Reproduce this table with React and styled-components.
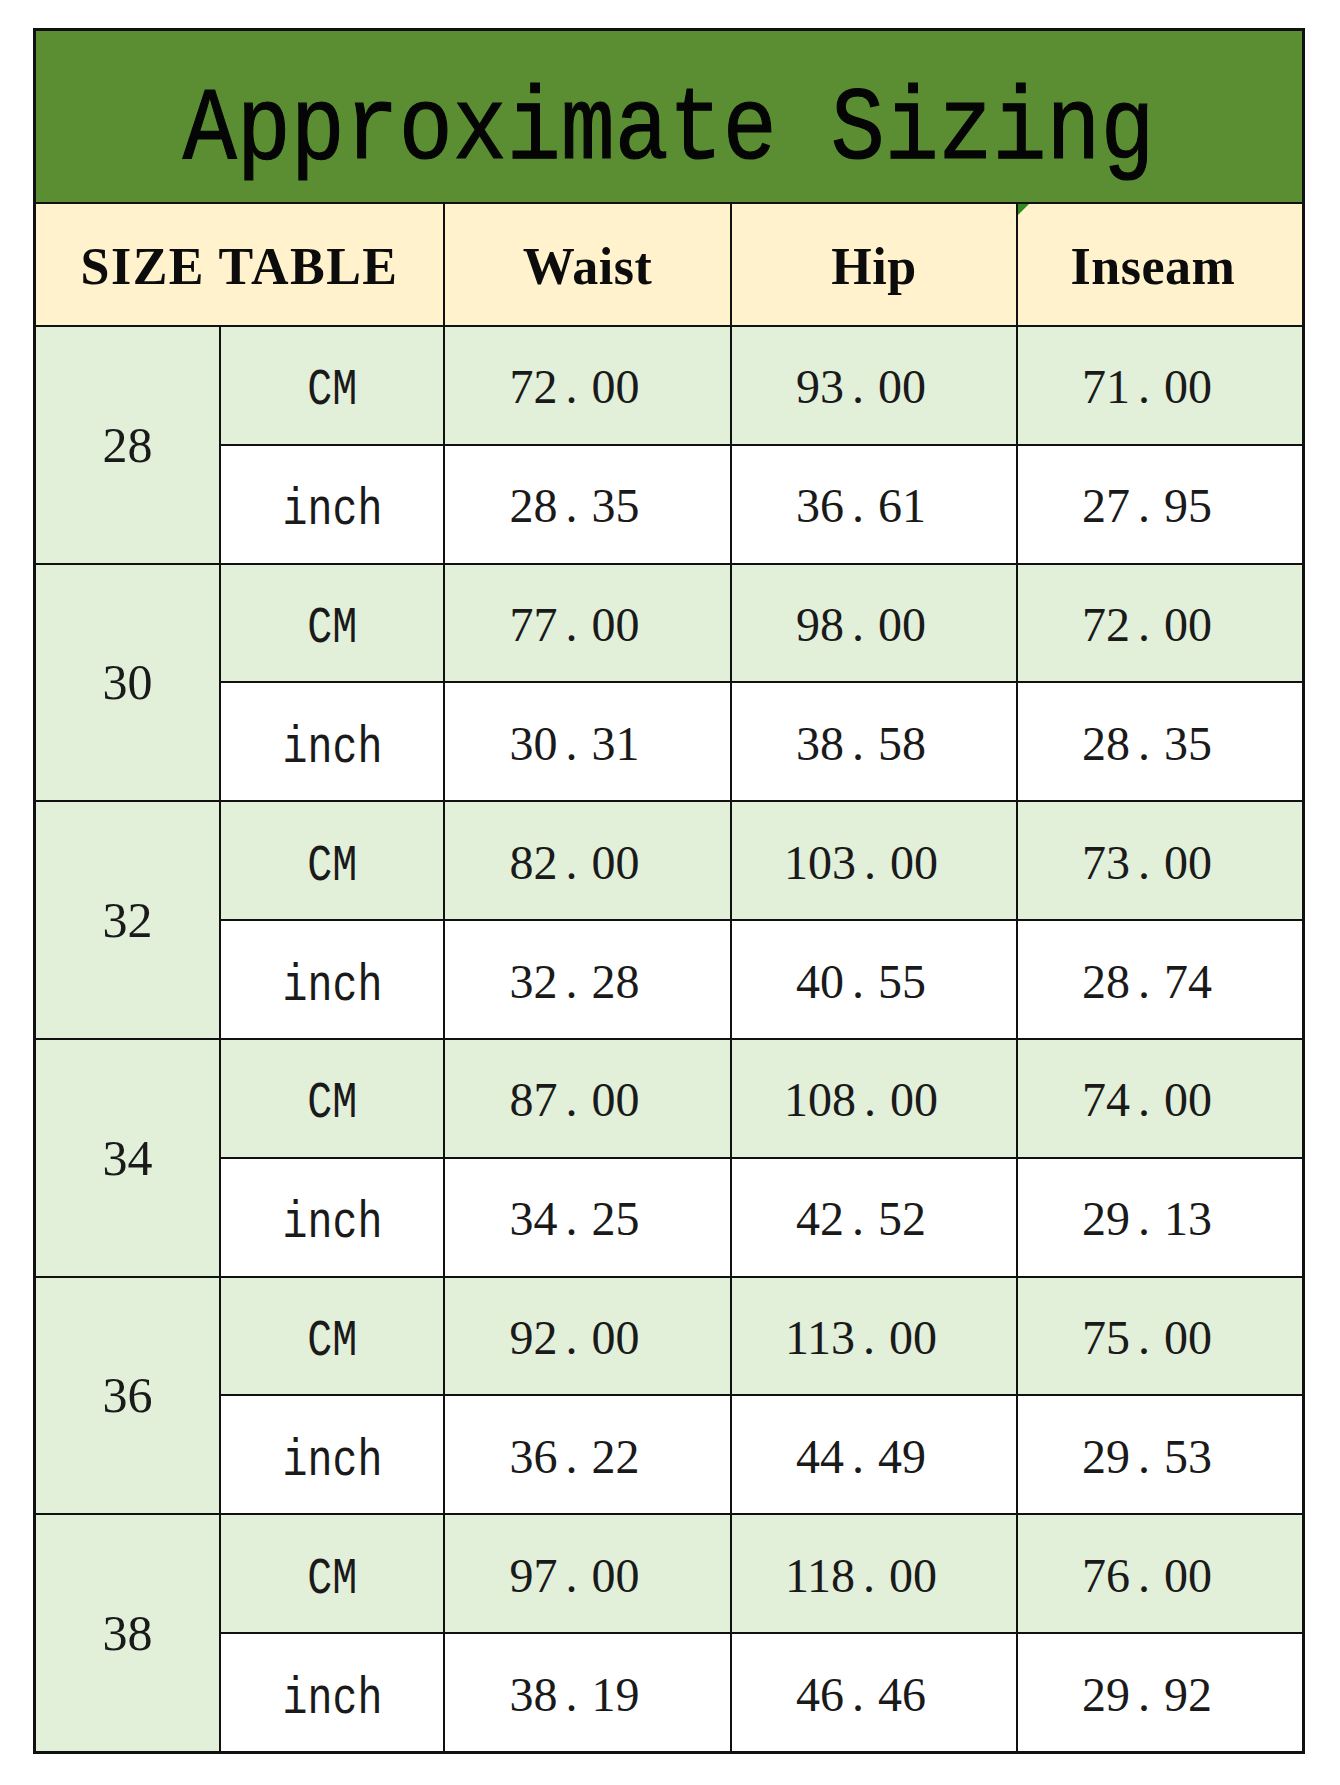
import React from "react";
import styled, { createGlobalStyle } from "styled-components";

const Global = createGlobalStyle`
  html, body { margin: 0; padding: 0; background: #ffffff; }
  body { font-family: "Liberation Serif", serif; }
`;

const Page = styled.div`
  padding: 28px 0 0 33px;
  width: 1340px;
  height: 1785px;
  box-sizing: border-box;
  background: #ffffff;
`;

const Grid = styled.div`
  display: grid;
  width: 1272px;
  box-sizing: border-box;
  grid-template-columns: 183px 222px 285px 284px 284px;
  grid-template-rows: 171px 121px repeat(12, 116.83px);
  gap: 2px;
  border: 3px solid #111;
  background: #111;
`;

const Cell = styled.div`
  display: flex;
  align-items: center;
  justify-content: center;
  background: ${(p) => p.$bg};
  grid-column: ${(p) => p.$col || "auto"};
  grid-row: ${(p) => p.$row || "auto"};
  position: relative;
  color: #111;
`;

const TitleCell = styled(Cell)`
  padding-top: 26px;
  box-sizing: border-box;
`;

const TitleText = styled.span`
  display: inline-block;
  font-family: "Liberation Mono", "Courier New", monospace;
  font-size: 104px;
  line-height: 1;
  color: #050505;
  -webkit-text-stroke: 1.2px #050505;
  transform: scaleX(0.865);
  white-space: pre;
`;

const HeadText = styled.span`
  font-family: "Liberation Serif", "Times New Roman", serif;
  font-weight: 700;
  font-size: 52px;
  letter-spacing: ${(p) => p.$ls || "0.5px"};
  line-height: 1;
  color: #0c0c0c;
  margin-top: 4px;
  margin-right: ${(p) => p.$shift || "0"};
`;

const CornerMark = styled.span`
  position: absolute;
  left: 0;
  top: 0;
  width: 0;
  height: 0;
  border-top: 11px solid #2e8b22;
  border-right: 11px solid transparent;
`;

const SizeText = styled.span`
  font-family: "Liberation Serif", "Times New Roman", serif;
  font-size: 50px;
  line-height: 1;
  color: #1a1a1a;
`;

const UnitText = styled.span`
  display: inline-block;
  font-family: "Liberation Mono", "Courier New", monospace;
  font-size: 52px;
  line-height: 1;
  color: #1a1a1a;
  transform: scaleX(0.8);
  margin-top: ${(p) => (p.$lower ? "14px" : "12px")};
`;

const Num = styled.span`
  display: inline-flex;
  align-items: baseline;
  font-family: "Liberation Serif", "Times New Roman", serif;
  font-size: 48px;
  line-height: 1;
  color: #1a1a1a;
  margin-top: 4px;
  margin-right: 26px;
`;

const Digits = styled.span``;

const Dot = styled.span`
  display: inline-block;
  width: 34px;
  padding-left: 8px;
  box-sizing: border-box;
`;

const GREEN = "#5b8e32";
const CREAM = "#fff2cc";
const LIGHT = "#e2efd9";
const WHITE = "#ffffff";

const data = [
  { size: "28", cm: ["72.00", "93.00", "71.00"], inch: ["28.35", "36.61", "27.95"] },
  { size: "30", cm: ["77.00", "98.00", "72.00"], inch: ["30.31", "38.58", "28.35"] },
  { size: "32", cm: ["82.00", "103.00", "73.00"], inch: ["32.28", "40.55", "28.74"] },
  { size: "34", cm: ["87.00", "108.00", "74.00"], inch: ["34.25", "42.52", "29.13"] },
  { size: "36", cm: ["92.00", "113.00", "75.00"], inch: ["36.22", "44.49", "29.53"] },
  { size: "38", cm: ["97.00", "118.00", "76.00"], inch: ["38.19", "46.46", "29.92"] },
];

function Value({ v }) {
  const [a, b] = v.split(".");
  return (
    <Num>
      <Digits>{a}</Digits>
      <Dot>.</Dot>
      <Digits>{b}</Digits>
    </Num>
  );
}

export default function App() {
  return (
    <>
      <Global />
      <Page>
        <Grid>
          <TitleCell $bg={GREEN} $col="1 / span 5">
            <TitleText>Approximate Sizing</TitleText>
          </TitleCell>
          <Cell $bg={CREAM} $col="1 / span 2">
            <HeadText $ls="1.5px">SIZE TABLE</HeadText>
          </Cell>
          <Cell $bg={CREAM}>
            <HeadText>Waist</HeadText>
          </Cell>
          <Cell $bg={CREAM}>
            <HeadText>Hip</HeadText>
          </Cell>
          <Cell $bg={CREAM}>
            <CornerMark />
            <HeadText $shift="14px">Inseam</HeadText>
          </Cell>
          {data.map((r) => (
            <React.Fragment key={r.size}>
              <Cell $bg={LIGHT} $row="span 2">
                <SizeText>{r.size}</SizeText>
              </Cell>
              <Cell $bg={LIGHT}>
                <UnitText>CM</UnitText>
              </Cell>
              {r.cm.map((v, i) => (
                <Cell $bg={LIGHT} key={"c" + i}>
                  <Value v={v} />
                </Cell>
              ))}
              <Cell $bg={WHITE}>
                <UnitText $lower>inch</UnitText>
              </Cell>
              {r.inch.map((v, i) => (
                <Cell $bg={WHITE} key={"i" + i}>
                  <Value v={v} />
                </Cell>
              ))}
            </React.Fragment>
          ))}
        </Grid>
      </Page>
    </>
  );
}
